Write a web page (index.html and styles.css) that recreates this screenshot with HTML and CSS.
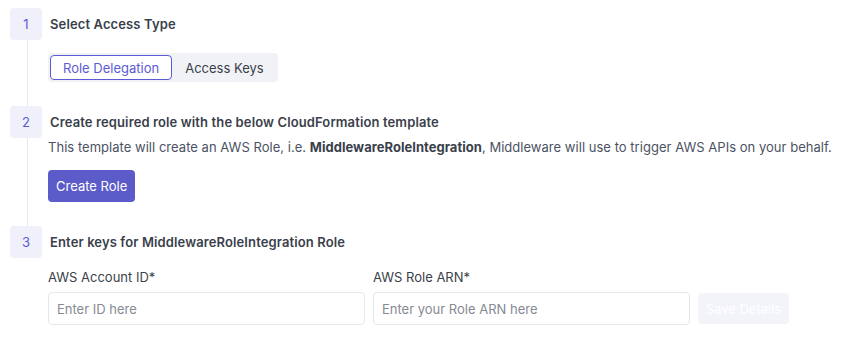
FILE: index.html
```html
<!DOCTYPE html>
<html>
<head>
<meta charset="utf-8">
<link rel="stylesheet" href="styles.css">
</head>
<body>
<div class="steps">
  <div class="step">
    <div class="rail"><div class="badge">1</div><div class="line"></div></div>
    <div class="content">
      <div class="title">Select Access Type</div>
      <div class="toggle">
        <button class="seg active">Role Delegation</button>
        <button class="seg">Access Keys</button>
      </div>
    </div>
  </div>
  <div class="step">
    <div class="rail"><div class="badge">2</div><div class="line"></div></div>
    <div class="content">
      <div class="title">Create required role with the below CloudFormation template</div>
      <div class="desc">This template will create an AWS Role, i.e. <b>MiddlewareRoleIntegration</b>, Middleware will use to trigger AWS APIs on your behalf.</div>
      <button class="primary">Create Role</button>
    </div>
  </div>
  <div class="step last">
    <div class="rail"><div class="badge">3</div></div>
    <div class="content">
      <div class="title">Enter keys for MiddlewareRoleIntegration Role</div>
      <div class="form">
        <div class="field">
          <label class="label">AWS Account ID*</label>
          <input class="input" placeholder="Enter ID here">
        </div>
        <div class="field">
          <label class="label">AWS Role ARN*</label>
          <input class="input" placeholder="Enter your Role ARN here">
        </div>
        <button class="save">Save Details</button>
      </div>
    </div>
  </div>
</div>
</body>
</html>
```
FILE: styles.css
```css
* { box-sizing: border-box; }
body {
  margin: 0;
  background: #ffffff;
  font-family: Inter, "Noto Sans", sans-serif;
  font-size: 13px;
  color: #3a3f4b;
}
.steps { padding: 8px 10px; }
.step { display: flex; gap: 6px; }
.rail { width: 32px; display: flex; flex-direction: column; align-items: center; flex-shrink: 0; }
.badge {
  width: 32px; height: 32px;
  border-radius: 4px;
  background: #f0f0fa;
  color: #5b5bd6;
  font-size: 13px;
  display: flex; align-items: center; justify-content: center;
}
.line { flex: 1; width: 1px; background: #e6e7eb; margin-left: 2px; }
.content { flex: 1; padding-bottom: 24px; }
.step.last .content { padding-bottom: 0; }
.title {
  line-height: 32px;
  font-weight: 600;
  padding-left: 2px;
  letter-spacing: 0.12px;
  color: #3a3f4b;
}
.toggle {
  margin-top: 13px;
  display: inline-flex;
  background: #f1f2f6;
  border-radius: 4px;
  padding: 2px;
}
.seg {
  font: inherit;
  font-size: 13px;
  height: 25px;
  border: 1px solid transparent;
  background: transparent;
  border-radius: 4px;
  color: #3a3f4b;
  padding: 0 12px;
  cursor: pointer;
}
.seg.active {
  background: #ffffff;
  border-color: #5b5bd6;
  color: #5b5bd6;
}
.seg + .seg { padding: 0 11px 0 12px; }
.desc {
  line-height: 18px;
  color: #4b5263;
  letter-spacing: 0.03px;
}
.desc b { font-weight: 700; color: #3a3f4b; }
.primary {
  margin-top: 14px;
  font: inherit;
  font-size: 13px;
  height: 32px;
  padding: 0 8px;
  border: none;
  border-radius: 4px;
  background: #5b5bc9;
  color: #ffffff;
}
.form { display: flex; align-items: flex-end; gap: 8px; margin-top: 10px; }
.field { display: flex; flex-direction: column; gap: 6px; width: 317px; }
.label { line-height: 18px; color: #3a3f4b; }
.input {
  font: inherit;
  font-size: 13px;
  height: 33px;
  border: 1px solid #e6e7eb;
  border-radius: 4px;
  padding: 0 8px;
  color: #3a3f4b;
  outline: none;
}
.input::placeholder { color: #868a94; }
.save {
  font: inherit;
  font-size: 13px;
  height: 31px;
  margin-bottom: 1px;
  width: 91px;
  border: none;
  border-radius: 4px;
  background: #f3f4fa;
  color: #ffffff;
}
```
